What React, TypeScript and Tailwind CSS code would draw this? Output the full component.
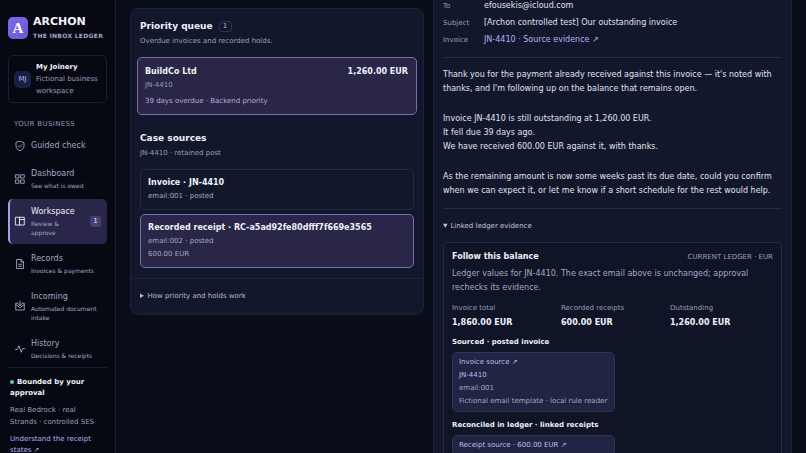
import type { ReactNode } from "react";
import clsx from "clsx";

type NavItem = {
  title: string;
  hint?: string;
  icon: ReactNode;
  badge?: number;
  active?: boolean;
};

const Icon = ({ children }: { children: ReactNode }) => (
  <svg
    viewBox="0 0 24 24"
    className="size-3 shrink-0"
    fill="none"
    stroke="currentColor"
    strokeWidth="1.8"
    strokeLinecap="round"
    strokeLinejoin="round"
    aria-hidden="true"
  >
    {children}
  </svg>
);

const navItems: NavItem[] = [
  {
    title: "Guided check",
    icon: (
      <Icon>
        <path d="M12 2.500 L20 5.500 V11.500 C20 16.500 16.500 19.800 12 21.500 C7.500 19.800 4 16.500 4 11.500 V5.500 Z" />
        <path d="M8.500 12 L11 14.500 L15.500 9.500" />
      </Icon>
    ),
  },
  {
    title: "Dashboard",
    hint: "See what is owed",
    icon: (
      <Icon>
        <rect x="3.500" y="3.500" width="6.500" height="6.500" />
        <rect x="14" y="3.500" width="6.500" height="6.500" />
        <rect x="3.500" y="14" width="6.500" height="6.500" />
        <rect x="14" y="14" width="6.500" height="6.500" />
      </Icon>
    ),
  },
  {
    title: "Workspace",
    hint: "Review & approve",
    badge: 1,
    active: true,
    icon: (
      <Icon>
        <rect x="3.500" y="4.500" width="17" height="15.500" />
        <path d="M11 9 H20.500 M11 4.500 V20" />
      </Icon>
    ),
  },
  {
    title: "Records",
    hint: "Invoices & payments",
    icon: (
      <Icon>
        <path d="M6 3 H14 L19 8 V21 H6 Z" />
        <path d="M14 3 V8 H19 M9.500 12.500 H15.500 M9.500 16.500 H15.500" />
      </Icon>
    ),
  },
  {
    title: "Incoming",
    hint: "Automated document intake",
    icon: (
      <Icon>
        <path d="M8 6.500 H3.500 V20 H20.500 V6.500 H16" />
        <path d="M12 2.500 V11 M8.500 8 L12 11.500 L15.500 8 M3.500 9 L12 15.500 L20.500 9" />
      </Icon>
    ),
  },
  {
    title: "History",
    hint: "Decisions & receipts",
    icon: (
      <Icon>
        <path d="M3 13 H6.500 L10 5.500 L14.500 18.500 L17.500 11 H21" />
      </Icon>
    ),
  },
];

const totals = [
  { label: "Invoice total", value: "1,860.00 EUR" },
  { label: "Recorded receipts", value: "600.00 EUR" },
  { label: "Outstanding", value: "1,260.00 EUR" },
];

const Sidebar = () => (
  <aside className="flex w-29 shrink-0 flex-col border-r border-[#1a1e30] bg-[#060812] px-2 pt-4">
    <div className="flex items-center gap-[5px]">
      <div className="flex h-[22px] w-5 items-center justify-center rounded-[5px] bg-linear-to-br from-[#8068f0] to-[#6858d0] font-['Liberation_Serif',serif] text-[15px] font-bold text-white">
        A
      </div>
      <div>
        <p className="text-[11px] leading-3 font-bold text-[#f1f2fa]">ARCHON</p>
        <p className="mt-1 text-[6px] leading-2 font-bold tracking-wider whitespace-nowrap text-[#a3a8c2]">
          THE INBOX LEDGER
        </p>
      </div>
    </div>

    <div className="mt-[15px] flex items-center gap-[5px] rounded-[5px] border border-[#1a1e30] px-[5px] py-[5px]">
      <span className="flex size-[17px] shrink-0 items-center justify-center rounded-[5px] bg-[#1a1f45] text-[7px] text-[#b8b8f0]">
        MJ
      </span>
      <p className="text-[7px] leading-3 text-[#9a9fb8]">
        <strong className="block text-[#f1f2fa]">My Joinery</strong>
        Fictional business workspace
      </p>
    </div>

    <p className="mt-[15px] px-[6px] text-[7px] leading-3 tracking-wider text-[#9297b2]">YOUR BUSINESS</p>

    <nav className="mt-[3px] flex flex-col gap-[2px]">
      {navItems.map((item) => (
        <a
          key={item.title}
          href="#"
          className={clsx(
            "flex items-center gap-[5px] pr-[6px]",
            item.hint ? "pt-[6px] pb-[7px]" : "py-[6px]",
            item.active
              ? "rounded-[5px] border-l-2 border-[#a99bf0] bg-[#292649] pl-1 text-[#f1f2fa]"
              : "pl-[6px] text-[#a3a8c2]",
          )}
        >
          {item.icon}
          <span className="min-w-0 flex-1">
            <span className="block text-[8px] leading-[14px]">{item.title}</span>
            {item.hint && <span className="block text-[6px] leading-[9px] text-[#a3a8c2]">{item.hint}</span>}
          </span>
          {item.badge && (
            <span className="ml-2 flex h-[11px] w-[11px] items-center justify-center rounded-[3px] bg-[#453f78] text-[7px] text-[#e6e2ff]">
              {item.badge}
            </span>
          )}
        </a>
      ))}
    </nav>

    <div className="border-t border-[#1a1e30] px-[2px] pt-[9px] text-[7px] text-[#9a9fb8]">
      <p className="leading-[11px] font-bold text-[#f1f2fa]">
        <span className="mr-[3px] inline-block size-1 rounded-full bg-[#6cc5ad]" />
        Bounded by your approval
      </p>
      <p className="mt-[5px] pr-2 leading-3">Real Bedrock · real Strands · controlled SES</p>
      <a href="#" className="mt-[6px] block leading-[11px] text-[#b9aef5]">
        Understand the receipt states ↗
      </a>
    </div>
  </aside>
);

const QueuePanel = () => (
  <section className="mt-2 w-[294px] shrink-0 self-start rounded-lg border border-[#1d2338] bg-[#12182b]">
    <div className="px-[9px] pt-[11px] pb-[10px]">
      <h2 className="flex items-center gap-[6px] text-[9px] leading-3 font-bold text-[#eef0fa]">
        Priority queue
        <span className="flex h-[11px] w-[13px] items-center justify-center rounded-[3px] border border-[#2b3150] text-[7px] font-normal text-[#b5b9d2]">
          1
        </span>
      </h2>
      <p className="mt-[3px] text-[7px] leading-3 text-[#9a9fb8]">Overdue invoices and recorded holds.</p>

      <button
        type="button"
        className="-mx-[3px] mt-[10px] block w-[calc(100%+6px)] rounded-[5px] border border-[#766eae] bg-[#292647] pt-2 pr-2 pb-[7px] pl-[7px] text-left text-[7px]"
      >
        <span className="flex justify-between text-[8px] leading-3 font-bold text-[#eef0fa]">
          <span>BuildCo Ltd</span>
          <span>1,260.00 EUR</span>
        </span>
        <span className="mt-px block leading-3 text-[#9a9fb8]">JN-4410</span>
        <span className="mt-1 block leading-3 text-[#bda8dc]">39 days overdue · Backend priority</span>
      </button>

      <h2 className="mt-[17px] text-[9px] leading-3 font-bold text-[#eef0fa]">Case sources</h2>
      <p className="mt-[3px] text-[7px] leading-3 text-[#9a9fb8]">JN-4410 · retained post</p>

      <div className="mt-[10px] flex flex-col gap-1 text-[7px] leading-[13px] text-[#a3a8c2]">
        <button type="button" className="rounded-[5px] border border-[#252b42] px-[7px] py-[6px] text-left">
          <span className="block text-[8px] leading-[14px] font-bold text-[#eef0fa]">Invoice · JN-4410</span>
          <span className="block">email:001 · posted</span>
        </button>
        <button type="button" className="rounded-[5px] border border-[#766eae] bg-[#292647] px-[7px] py-[6px] text-left">
          <span className="block text-[8px] leading-[14px] font-bold text-[#eef0fa]">
            Recorded receipt · RC-a5ad92fe80dfff7f669e3565
          </span>
          <span className="block">email:002 · posted</span>
          <span className="block">600.00 EUR</span>
        </button>
      </div>
    </div>
    <details className="border-t border-[#1d2338] px-[9px] pt-[11px] pb-3 text-[7px] leading-3 text-[#b5b9d2]">
      <summary>How priority and holds work</summary>
    </details>
  </section>
);

const sourceCard =
  "mt-1 block w-fit min-w-[163px] rounded-[5px] border border-[#2f3554] bg-[#1f2542] px-[6px] py-[3px] text-[7px] leading-[13px] text-[#a3a8c2]";

const MessagePanel = () => (
  <section className="min-w-0 flex-1 overflow-hidden border-x border-[#1d2338] bg-[#12182b] px-[9px]">
    <dl className="grid grid-cols-[41px_1fr] gap-y-[5px] border-b border-[#252b42] pb-[11px] text-[8px] leading-3 text-[#e0e2f0]">
      <dt className="text-[7px] text-[#9a9fb8]">To</dt>
      <dd>efousekis@icloud.com</dd>
      <dt className="text-[7px] text-[#9a9fb8]">Subject</dt>
      <dd>[Archon controlled test] Our outstanding invoice</dd>
      <dt className="text-[7px] text-[#9a9fb8]">Invoice</dt>
      <dd>
        <a href="#" className="text-[#b9aef5]">
          JN-4410 · Source evidence ↗
        </a>
      </dd>
    </dl>

    <div className="flex flex-col gap-4 border-b border-[#252b42] py-[10px] text-[8px] leading-[14px] text-[#e0e2f0]">
      <p>
        Thank you for the payment already received against this invoice — it's noted with thanks, and I'm following up
        on the balance that remains open.
      </p>
      <p>
        Invoice JN-4410 is still outstanding at 1,260.00 EUR.
        <br />
        It fell due 39 days ago.
        <br />
        We have received 600.00 EUR against it, with thanks.
      </p>
      <p>
        As the remaining amount is now some weeks past its due date, could you confirm when we can expect it, or let me
        know if a short schedule for the rest would help.
      </p>
    </div>

    <details open className="pt-[11px]">
      <summary className="text-[7px] leading-3 text-[#c3c5dc]">Linked ledger evidence</summary>
      <div className="mt-[10px] rounded-[5px] border border-[#252b42] bg-[#0f1527] px-2 pt-2 pb-4">
        <div className="flex items-center justify-between leading-3">
          <h3 className="text-[8px] font-bold text-[#eef0fa]">Follow this balance</h3>
          <span className="text-[7px] text-[#9a9fb8]">CURRENT LEDGER · EUR</span>
        </div>
        <p className="mt-1 text-[8px] leading-[14px] text-[#a3a8c2]">
          Ledger values for JN-4410. The exact email above is unchanged; approval rechecks its evidence.
        </p>
        <dl className="mt-[7px] grid grid-cols-3 gap-[6px]">
          {totals.map((total) => (
            <div key={total.label}>
              <dt className="text-[7px] leading-3 text-[#9a9fb8]">{total.label}</dt>
              <dd className="mt-[3px] text-[8px] leading-3 font-bold text-[#eef0fa]">{total.value}</dd>
            </div>
          ))}
        </dl>

        <h4 className="mt-[7px] text-[7px] leading-3 font-bold text-[#eef0fa]">Sourced · posted invoice</h4>
        <a href="#" className={sourceCard}>
          <span className="block text-[#c0bbf0]">Invoice source ↗</span>
          <span className="block text-[#c0bbf0]">JN-4410</span>
          <span className="block">email:001</span>
          <span className="block">Fictional email template · local rule reader</span>
        </a>
        <h4 className="mt-[7px] text-[7px] leading-3 font-bold text-[#eef0fa]">
          Reconciled in ledger · linked receipts
        </h4>
        <a href="#" className={sourceCard}>
          <span className="block text-[#c0bbf0]">Receipt source · 600.00 EUR ↗</span>
        </a>
      </div>
    </details>
  </section>
);

const App = () => {
  return (
    <div className="flex h-screen overflow-hidden bg-[#090d1a] font-['DejaVu_Sans',sans-serif]">
      <Sidebar />
      <main className="flex min-w-0 flex-1 gap-[9px] px-[14px]">
        <QueuePanel />
        <MessagePanel />
      </main>
    </div>
  );
};

export default App;
